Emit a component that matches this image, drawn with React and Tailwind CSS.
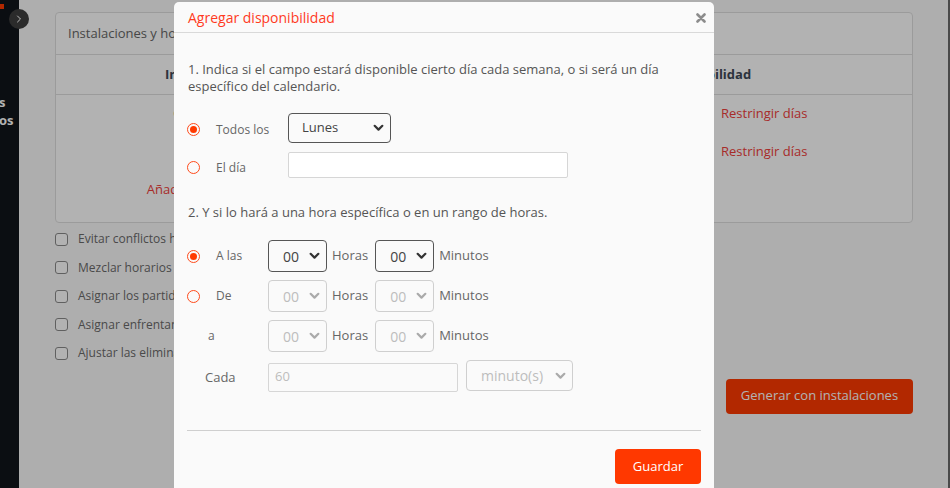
import { ChevronRight } from 'lucide-react';

function Chevron({ className }) {
    return (
        <svg viewBox="0 0 10 7" className={className} fill="none" stroke="currentColor" strokeWidth="2" strokeLinecap="round" strokeLinejoin="round">
            <path d="M1.5 1.5l3.5 3.5 3.5-3.5" />
        </svg>
    );
}

function FakeSelect({ value, width, height, disabled, pl, textSize = 'text-[14px]' }) {
    return (
        <div
            className={`relative flex items-center rounded-[4px] border ${disabled ? 'border-[#cfcfcf] text-[#bdbdbd]' : 'border-[#555] text-[#444]'} ${width} ${height} ${pl} ${textSize}`}
        >
            <span>{value}</span>
            <Chevron className={`absolute right-[6px] top-1/2 -translate-y-1/2 w-[11px] h-[8px] ${disabled ? 'text-[#aaa]' : 'text-[#333]'}`} />
        </div>
    );
}

function Radio({ checked }) {
    return (
        <span className="w-[13px] h-[13px] rounded-full border-[1.5px] border-[#ff4a1a] flex items-center justify-center shrink-0">
            {checked && <span className="w-[7px] h-[7px] rounded-full bg-[#ff3a00]" />}
        </span>
    );
}

function TimeRow({ radio, checked, label, labelClass, disabled }) {
    return (
        <div className="flex items-center h-[32px]">
            <div className="w-[81px] flex items-center">
                {radio ? (
                    <>
                        <Radio checked={checked} />
                        <span className="ml-[16px] text-[12px] text-[#666]">{label}</span>
                    </>
                ) : (
                    <span className={`text-[12px] text-[#666] ${labelClass}`}>{label}</span>
                )}
            </div>
            <FakeSelect value="00" width="w-[59px]" height="h-[32px]" pl="pl-[14px]" disabled={disabled} />
            <span className="ml-[5px] text-[13px] text-[#666]">Horas</span>
            <div className="ml-[7px]">
                <FakeSelect value="00" width="w-[59px]" height="h-[32px]" pl="pl-[14px]" disabled={disabled} />
            </div>
            <span className="ml-[5px] text-[13px] text-[#666]">Minutos</span>
        </div>
    );
}

const checks = [
    'Evitar conflictos horarios entre equipos',
    'Mezclar horarios de las categorías',
    'Asignar los partidos de forma equitativa',
    'Asignar enfrentamientos en la misma instalación',
    'Ajustar las eliminatorias al calendario',
];

export default function App() {
    return (
        <div className="relative w-full h-screen overflow-hidden bg-[#fafafa] font-['Open_Sans',sans-serif]">
            <div className="flex h-full">
                {/* sidebar, collapsed */}
                <div className="w-[19px] shrink-0 bg-[#10151b] relative overflow-hidden">
                    <div className="absolute left-0 top-[4px] w-[4px] h-[5px] bg-[#ff3a00]" />
                    <div className="pt-[93px] text-[13px] font-bold text-white leading-[18px]">
                        <div className="-ml-[1px]">s</div>
                        <div className="-ml-[1px]">os</div>
                    </div>
                </div>

                <div className="flex-1 pl-[36px] pr-[35px] pt-[12px]">
                    <div className="bg-white border border-[#dedede] rounded-[4px]">
                        <div className="h-[42px] px-[12px] flex items-center text-[13px] text-[#666] border-b border-[#dedede]">
                            Instalaciones y horarios
                        </div>
                        <div className="h-[40px] flex items-center text-[13px] font-bold text-[#3f4a58] border-b border-[#dedede]">
                            <div className="w-[290px] text-center">Instalación</div>
                            <div className="w-[145px] text-center">Horarios</div>
                            <div className="flex-1 text-center pl-[6px]">Disponibilidad</div>
                        </div>
                        <div className="pb-[13px] text-[13px]">
                            <div className="h-[38px] flex items-center">
                                <div className="w-[290px] text-center text-[#ff5a1a]">Cancha 1</div>
                                <div className="w-[145px]" />
                                <div className="flex-1 pl-[230px] text-[#f0403c]">Restringir días</div>
                            </div>
                            <div className="h-[38px] flex items-center">
                                <div className="w-[290px]" />
                                <div className="w-[145px]" />
                                <div className="flex-1 pl-[230px] text-[#f0403c]">Restringir días</div>
                            </div>
                            <div className="h-[38px] flex items-center">
                                <div className="w-[290px] text-center text-[#f0403c]">Añadir instalación</div>
                            </div>
                        </div>
                    </div>

                    <div className="mt-[2px]">
                        {checks.map(c => (
                            <div key={c} className="h-[28.5px] flex items-center">
                                <span className="w-[13px] h-[13px] rounded-[3px] border border-[#8a8a8a] bg-white" />
                                <span className="ml-[10px] text-[12px] text-[#6a6a6a]">{c}</span>
                            </div>
                        ))}
                    </div>

                    <div className="flex justify-end mt-[11px]">
                        <button className="w-[187px] h-[35px] rounded-[4px] bg-[#ff3a00] text-white text-[13px]">
                            Generar con instalaciones
                        </button>
                    </div>
                </div>
                <div className="w-[2px] bg-[#6a6a6a]" />
            </div>

            {/* overlay */}
            <div className="absolute inset-0 bg-black/30" />

            <div className="absolute left-[9px] top-[9px] w-[20px] h-[20px] rounded-full bg-[#2b2b2b] flex items-center justify-center">
                <ChevronRight className="w-[12px] h-[12px] text-[#bbb]" strokeWidth={2} />
            </div>

            {/* modal */}
            <div className="absolute left-[174px] top-[2px] w-[540px] h-[520px] bg-[#fafafa] rounded-t-[5px]">
                <div className="h-[31px] pl-[14px] pr-[8px] flex items-center justify-between border-b border-[#d9d9d9]">
                    <span className="text-[14px] text-[#ff3b1f]">Agregar disponibilidad</span>
                    <svg viewBox="0 0 10 10" className="w-[10px] h-[10px] mt-[1px] text-[#8c8c8c]" stroke="currentColor" strokeWidth="2.6" strokeLinecap="round">
                        <path d="M1.5 1.5l7 7M8.5 1.5l-7 7" />
                    </svg>
                </div>

                <div className="px-[13px] pt-[28px]">
                    <p className="pl-[1px] text-[13px] leading-[17px] text-[#555]">
                        1. Indica si el campo estará disponible cierto día cada semana, o si será un día específico del calendario.
                    </p>

                    <div className="mt-[18px] flex items-center h-[30px]">
                        <div className="w-[101px] flex items-center pt-[3px]">
                            <Radio checked />
                            <span className="ml-[16px] text-[12px] text-[#666]">Todos los</span>
                        </div>
                        <FakeSelect value="Lunes" width="w-[103px]" height="h-[30px]" pl="pl-[13px]" textSize="text-[13px]" />
                    </div>
                    <div className="mt-[9px] flex items-center h-[26px]">
                        <div className="w-[101px] flex items-center pt-[5px]">
                            <Radio />
                            <span className="ml-[16px] text-[12px] text-[#666]">El día</span>
                        </div>
                        <div className="w-[280px] h-[26px] bg-white border border-[#d6d6d6] rounded-[2px]" />
                    </div>

                    <p className="mt-[26px] pl-[1px] text-[13px] leading-[17px] text-[#555]">
                        2. Y si lo hará a una hora específica o en un rango de horas.
                    </p>

                    <div className="mt-[19px] flex flex-col gap-[8px]">
                        <TimeRow radio checked label="A las" />
                        <TimeRow radio label="De" disabled />
                        <TimeRow label="a" labelClass="ml-[21px]" disabled />
                        <div className="flex items-center h-[31px]">
                            <div className="w-[81px]">
                                <span className="ml-[18px] text-[13px] text-[#666]">Cada</span>
                            </div>
                            <div className="w-[190px] h-[29px] mt-[3px] border border-[#d6d6d6] rounded-[2px] flex items-center pl-[6px] text-[13px] text-[#bdbdbd]">
                                60
                            </div>
                            <div className="ml-[8px]">
                                <FakeSelect value="minuto(s)" width="w-[107px]" height="h-[31px]" pl="pl-[14px]" disabled />
                            </div>
                        </div>
                    </div>

                    <div className="mt-[39px] border-t border-[#cfcfcf]" />

                    <div className="flex justify-end mt-[18px]">
                        <button className="w-[86px] h-[35px] rounded-[4px] bg-[#ff3800] text-white text-[13px]">
                            Guardar
                        </button>
                    </div>
                </div>
            </div>
        </div>
    );
}
